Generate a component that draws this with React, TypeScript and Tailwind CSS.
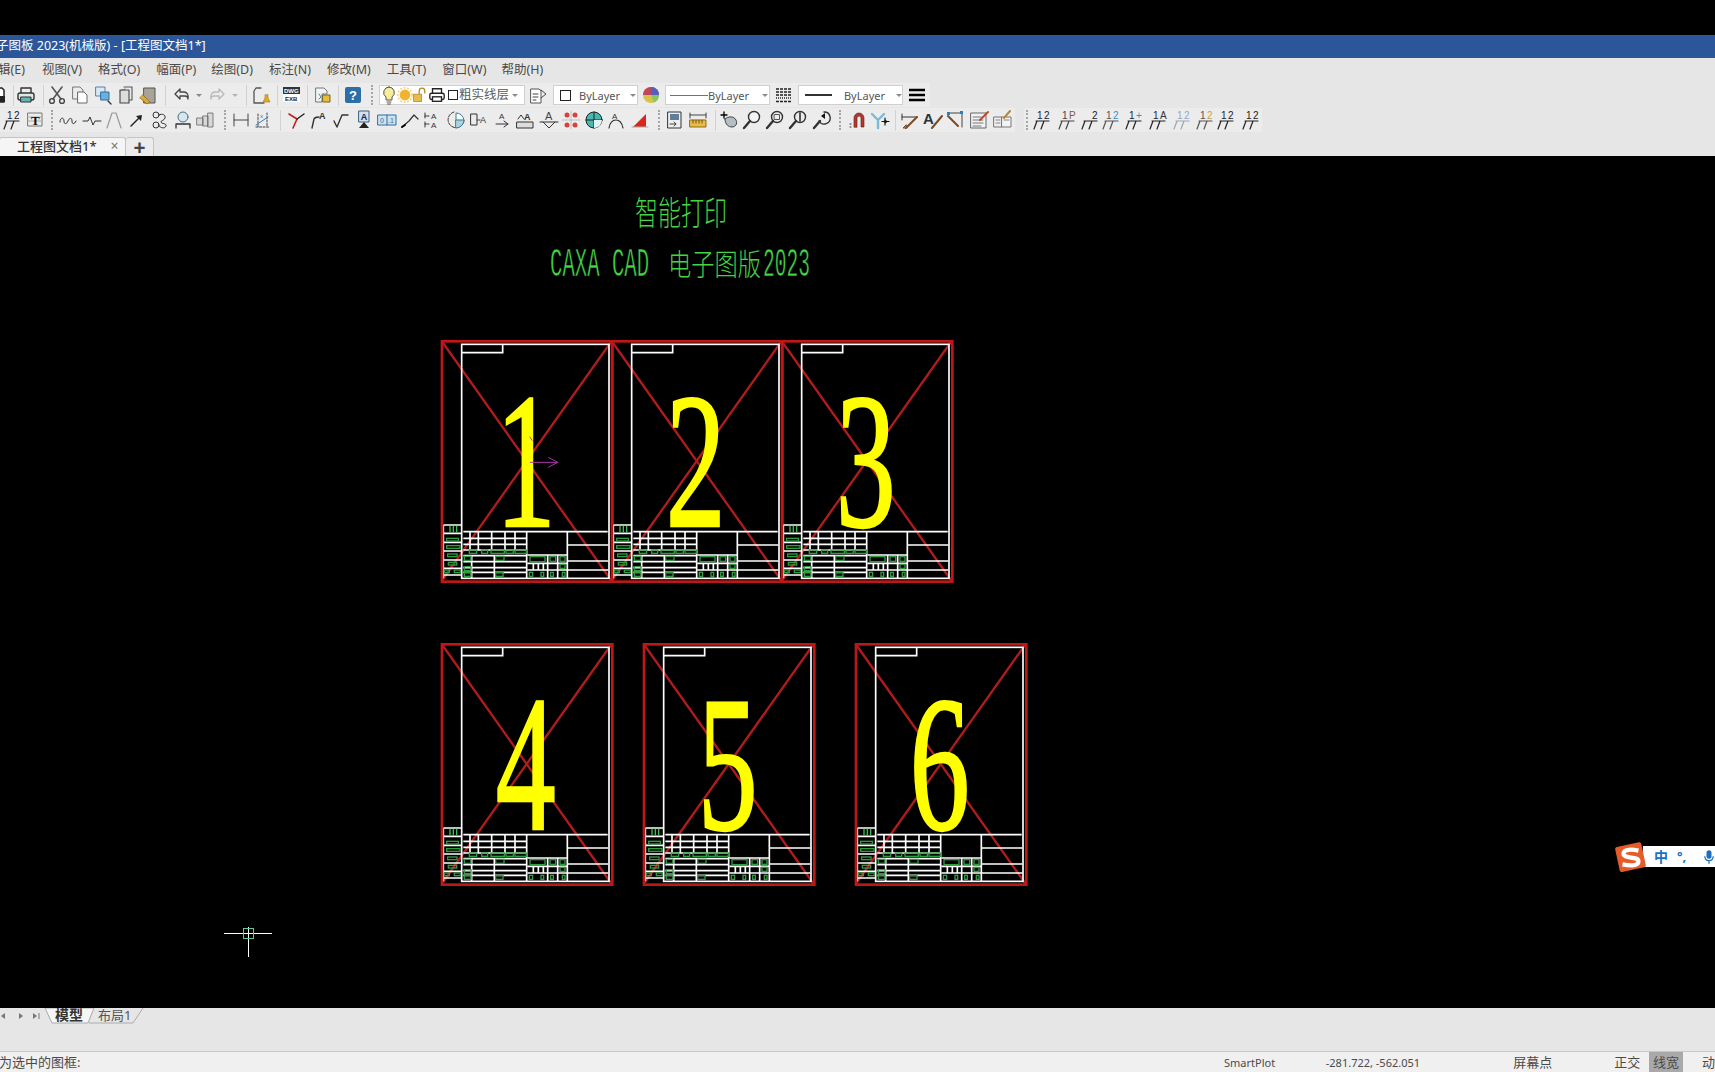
import type { ReactNode } from "react";

const cjk = "font-['Noto_Sans','Noto_Sans_CJK_SC',sans-serif]";

function I({ className = "", children }: { className?: string; children: ReactNode }) {
  return (
    <svg viewBox="0 0 20 20" fill="none" strokeLinecap="round" strokeLinejoin="round" className={`w-5 h-5 shrink-0 ${className}`}>
      {children}
    </svg>
  );
}

const Sep = ({ className = "" }: { className?: string }) => <div className={`w-px h-[21px] bg-[#d2d2d2] shrink-0 ${className}`} />;
const Grip = ({ className = "" }: { className?: string }) => (
  <div className={`w-0.5 h-[20px] shrink-0 border-l-2 border-dotted border-[#a5a5a5] ${className}`} />
);
const Drop = ({ className = "" }: { className?: string }) => (
  <div className={`w-0 h-0 shrink-0 border-x-[3px] border-t-[3px] border-x-transparent border-t-[#8a8a8a] ${className}`} />
);

// small "1 2 over slanted ticks" dimension icon, used all over the last toolbar
function Dim({ className = "", c = "#222", top = "12", t2 = "#222" }: { className?: string; c?: string; top?: string; t2?: string }) {
  return (
    <I className={className}>
      <path d="M4 11h13M2 19l3-8M9 19l3-8" stroke={c} strokeWidth="1.2" />
      <text x="5" y="9" fontSize="10" fontFamily="Liberation Sans" fill={c}>{top[0]}</text>
      <text x="12" y="9" fontSize="10" fontFamily="Liberation Sans" fill={t2}>{top[1]}</text>
    </I>
  );
}

function Toolbar1() {
  return (
    <div className="flex items-center h-[24px] w-[930px] bg-[#ececec] overflow-hidden">
      <I className="ml-[-14px]"><path d="M3 3h13l2 2v12H3z" fill="#fff" stroke="#222" strokeWidth="1.5" /><rect x="12" y="11" width="7" height="6" fill="#222" /></I>
      <Sep className="ml-[7px]" />
      <I className="ml-[2px]">
        <path d="M5 8V3h10v5" stroke="#333" strokeWidth="1.4" />
        <rect x="2" y="8" width="16" height="7" rx="2" fill="#dfe8e8" stroke="#333" strokeWidth="1.4" />
        <rect x="5" y="12" width="10" height="5" fill="#5fb8b0" stroke="#333" />
      </I>
      <Sep className="ml-[7px]" />
      <I className="ml-[3px]"><path d="M5 2l9 12M15 2L6 14" stroke="#555" strokeWidth="1.6" /><circle cx="5" cy="16" r="2.4" stroke="#444" strokeWidth="1.4" /><circle cx="15" cy="16" r="2.4" stroke="#444" strokeWidth="1.4" /></I>
      <I className="ml-[3px]"><path d="M3 2h7l3 3v9H3z" stroke="#777" /><path d="M8 7h6l3 3v8H8z" fill="#fff" stroke="#666" /></I>
      <I className="ml-[3px]"><rect x="3" y="2" width="9" height="9" fill="#d5e8f5" stroke="#5a7fa0" /><rect x="8" y="7" width="8" height="8" fill="#6ab0dd" stroke="#2f6d9c" /><path d="M15 16l3 3" stroke="#333" strokeWidth="1.4" /></I>
      <I className="ml-[3px]"><path d="M8 2h8v13h-3" stroke="#555" strokeWidth="1.1" /><rect x="4" y="5" width="9" height="13" fill="#ddd" stroke="#444" strokeWidth="1.1" /><path d="M4 6l5-2" stroke="#666" /></I>
      <I className="ml-[2px]"><rect x="6" y="3" width="11" height="15" fill="#a9a296" stroke="#555" /><path d="M2 13l7 6 3-2-7-7z" fill="#d9a93c" stroke="#8a6a20" strokeWidth=".8" /></I>
      <Sep className="ml-[7px]" />
      <I className="ml-[6px]"><path d="M8 4L3 9l5 5v-3h5c2 0 3 1 3 3 1-4-1-7-4-7H8z" stroke="#444" strokeWidth="1.3" /></I>
      <Drop className="ml-[4px]" />
      <I className="ml-[5px]"><path d="M12 4l5 5-5 5v-3H7c-2 0-3 1-3 3-1-4 1-7 4-7h4z" stroke="#b9b9b9" strokeWidth="1.3" /></I>
      <Drop className="ml-[5px] border-t-[#b5b5b5]" />
      <Sep className="ml-[8px]" />
      <I className="ml-[5px]"><path d="M9 3H4l-2 3v12h10" stroke="#555" strokeWidth="1.3" /><path d="M13 10v3l-2 4h7l-2-4v-3z" fill="#e3a91f" stroke="#a87a10" strokeWidth=".6" /></I>
      <Sep className="ml-[5px]" />
      <I className="ml-[4px]">
        <rect x="1" y="2" width="17" height="15" rx="1" fill="#fff" />
        <rect x="1" y="2" width="17" height="7" fill="#333" />
        <text x="2" y="8" fontSize="6" fontWeight="700" fontFamily="Liberation Sans" fill="#fff">DWG</text>
        <text x="3" y="16" fontSize="6" fontWeight="700" fontFamily="Liberation Sans" fill="#222">EXB</text>
      </I>
      <Sep className="ml-[5px]" />
      <I className="ml-[5px]"><path d="M3 3h8l3 3v3H9v8H3z" fill="#eef3f5" stroke="#777" /><path d="M6 9l2 3-2 2" stroke="#3c8fa0" /><path d="M10 10h7v7h-7z" fill="#e8bd3f" stroke="#7b6420" /></I>
      <Sep className="ml-[5px]" />
      <I className="ml-[4px]">
        <rect x="2" y="2" width="16" height="16" rx="2" fill="#2c6ea6" />
        <text x="10" y="15" fontSize="13" fontWeight="700" fontFamily="Liberation Sans" textAnchor="middle" fill="#fff">?</text>
      </I>
      <Grip className="ml-[8px]" />
      <div className="ml-[6px] w-[146px] h-[20px] flex items-center bg-white border border-[#d0d0d0] shrink-0">
        <I className="ml-[-1px]"><path d="M10 2a5.5 5.5 0 0 0-3 10v3h6v-3a5.5 5.5 0 0 0-3-10z" fill="#f7ec9a" stroke="#555" /><path d="M8 17h4M8.500 19h3" stroke="#555" /></I>
        <svg viewBox="0 0 20 20" className="w-[18px] h-[18px] ml-[-3px] shrink-0"><circle cx="10" cy="10" r="6" fill="#f1b431" /><circle cx="10" cy="10" r="8" stroke="#f6d27a" strokeDasharray="2 2" strokeWidth="2" fill="none" /></svg>
        <svg viewBox="0 0 20 20" className="w-[16px] h-[16px] ml-[-2px] shrink-0"><rect x="2" y="9" width="10" height="9" fill="#e8bb52" stroke="#b48a2c" /><path d="M9 9V5a3.500 3.500 0 0 1 7 0v3" stroke="#b48a2c" strokeWidth="1.6" fill="none" /></svg>
        <svg viewBox="0 0 20 20" className="w-[18px] h-[18px] shrink-0" fill="none"><path d="M5 8V3h10v5" stroke="#222" strokeWidth="1.5" /><rect x="2" y="8" width="16" height="7" rx="2" stroke="#222" strokeWidth="1.5" /><rect x="5" y="12" width="10" height="5" fill="#fff" stroke="#222" strokeWidth="1.5" /></svg>
        <div className="ml-[2px] w-[10px] h-[10px] border border-[#222] shrink-0" />
        <span className="text-[12.5px] leading-none ml-[1px] text-[#5a5a5a] whitespace-nowrap">粗实线层</span>
        <Drop className="ml-[3px]" />
      </div>
      <I className="ml-[3px]"><path d="M3 4h8l2 2v12H3z" fill="#fff" stroke="#555" /><path d="M5 9h5M5 12h5M5 15h3" stroke="#444" /><path d="M13 5l5 4-5 4" stroke="#444" /></I>
      <div className="ml-[5px] w-[85px] h-[20px] flex items-center bg-white border border-[#d0d0d0] shrink-0">
        <div className="ml-[6px] w-[11px] h-[11px] border border-[#222]" />
        <span className="ml-[8px] text-[11px] leading-none text-[#555]">ByLayer</span>
        <Drop className="ml-[10px]" />
      </div>
      <I className="ml-[3px]">
        <circle cx="10" cy="10" r="8" fill="#d8c24a" />
        <path d="M2 10a8 8 0 0 1 16 0z" fill="#c0455e" />
        <path d="M10 10h8a8 8 0 0 1-5 7.400z" fill="#85c66b" />
        <path d="M10 2a8 8 0 0 1 8 8h-8z" fill="#5660b8" />
      </I>
      <div className="ml-[4px] w-[105px] h-[20px] flex items-center bg-white border border-[#d0d0d0] shrink-0">
        <div className="ml-[4px] w-[38px] h-px bg-[#d44]" />
        <span className="text-[11px] leading-none text-[#555]">ByLayer</span>
        <Drop className="ml-[13px]" />
      </div>
      <I className="ml-[4px]"><path d="M2 4h16M2 7h16M2 10h16M2 16.500h16" stroke="#222" strokeWidth="1.3" strokeDasharray="3 1" strokeLinecap="butt" /><path d="M2 13h16" stroke="#222" strokeWidth="1.5" strokeDasharray="1 1" strokeLinecap="butt" /></I>
      <div className="ml-[4px] w-[105px] h-[20px] flex items-center bg-white border border-[#d0d0d0] shrink-0">
        <div className="ml-[6px] w-[28px] h-[2px] bg-[#333]" />
        <span className="ml-[12px] text-[11px] leading-none text-[#555]">ByLayer</span>
        <Drop className="ml-[11px]" />
      </div>
      <I className="ml-[4px]"><path d="M2 5h16M2 10h16M2 15h16" stroke="#000" strokeWidth="2.4" strokeLinecap="butt" /></I>
    </div>
  );
}

function Band1() {
  const s = "#333";
  return (
    <div className="flex items-center h-[24px] w-[1015px] bg-[#ececec] shrink-0 overflow-hidden">
      <Dim className="ml-[2px]" />
      <I className="ml-[3px]"><rect x="3" y="3" width="14" height="13" stroke="#777" /><path d="M3 7h14M3 11h14" stroke="#aaa" /><text x="6" y="15" fontSize="13" fontWeight="700" fontFamily="Liberation Serif" fill="#111">T</text></I>
      <Grip className="ml-[6px]" />
      <I className="ml-[5px]"><path d="M2 12c0-5 4-5 4-1s3 3 4 0 4-4 4 0 3 3 4 0" stroke={s} /></I>
      <I className="ml-[4px]"><path d="M1 11h5l2-4 3 8 2-4h6" stroke={s} /></I>
      <I className="ml-[2px]"><path d="M8 3L3 18M12 3l5 15M8 3h4" stroke="#999" strokeWidth="1.2" /></I>
      <I className="ml-[3px]"><path d="M4 16L13 7" stroke="#222" strokeWidth="1.4" /><path d="M15 5l-1 6-5-5z" fill="#222" /></I>
      <I className="ml-[3px]"><circle cx="6" cy="5" r="3" stroke={s} /><circle cx="6" cy="15" r="3" stroke={s} /><path d="M9 5c3-2 7 0 6 3s-4 2-4 4 6 1 5 4-5 2-7 0" stroke={s} /></I>
      <I className="ml-[3px]"><circle cx="10" cy="7" r="5" fill="#d7e7f0" stroke="#4d6d80" /><path d="M3 18v-4h14v4" stroke={s} strokeWidth="1.3" /></I>
      <I className="ml-[3px]"><path d="M1 8h6v7H1zM7 6h5v10H7zM12 3h5v14h-5z" fill="#d8d8d8" stroke="#666" strokeWidth=".8" /></I>
      <Grip className="ml-[8px]" />
      <I className="ml-[5px]"><path d="M3 4v12M17 4v12M3 10h14" stroke="#444" /></I>
      <I className="ml-[2px]"><path d="M3 17h14M5 4v13M14 3v14" stroke="#444" strokeDasharray="2 1.500" /><text x="7" y="8" fontSize="6" fill="#2a7fbf">x</text><path d="M3 15l12-8" stroke="#2a7fbf" /></I>
      <Sep className="ml-[7px]" />
      <I className="ml-[6px]"><path d="M2 4l8 5" stroke="#c02020" strokeWidth="1.6" /><path d="M10 9L6 18" stroke="#c02020" strokeWidth="1.6" /><path d="M10 9l7-5" stroke="#222" strokeWidth="1.4" /></I>
      <I className="ml-[1px]"><path d="M4 18l2-9c1-2 3-2 5-2" stroke={s} strokeWidth="1.4" /><text x="11" y="9" fontSize="9" fontWeight="700" fontFamily="Liberation Sans" fill="#333">A</text></I>
      <I className="ml-[3px]"><path d="M3 11l3 6 5-12h6" stroke={s} strokeWidth="1.4" /></I>
      <I className="ml-[3px]"><rect x="5" y="1" width="10" height="11" fill="#cfe0ee" stroke="#3c5f80" /><text x="10" y="10" fontSize="9" fontWeight="700" fontFamily="Liberation Sans" textAnchor="middle" fill="#224">A</text><path d="M10 12l-5 6h10z" fill="#222" /></I>
      <I className="ml-[3px]"><rect x="1" y="5" width="18" height="10" fill="#cfe2ef" stroke="#2d6f9e" /><path d="M10 5v10" stroke="#2d6f9e" /><text x="3" y="13" fontSize="7" fontFamily="Liberation Sans" fill="#2d6f9e">0</text><text x="11" y="13" fontSize="7" fontFamily="Liberation Sans" fill="#2d6f9e">.1</text></I>
      <I className="ml-[3px]"><path d="M2 17l7-6 5-6 4 4" stroke={s} strokeWidth="1.2" /><path d="M2 17l3-2" stroke="#000" strokeWidth="2" /></I>
      <I className="ml-[2px]"><text x="9" y="9" fontSize="8" fontFamily="Liberation Sans" fill={s}>A</text><text x="9" y="18" fontSize="8" fontFamily="Liberation Sans" fill={s}>A</text><path d="M3 6h5M3 14h5" stroke={s} strokeDasharray="1.500 1" /><path d="M3 3v5M3 12v5" stroke={s} /></I>
      <I className="ml-[4px]"><path d="M8 2A8 8 0 1 0 18 11" stroke={s} strokeDasharray="3 1.500" /><path d="M10 10V3a8 8 0 0 1 8 7z" fill="#fff" stroke="#3d7d99" /><path d="M10 10h8a8 8 0 0 1-8 8z" fill="#a9d2e2" stroke="#3d7d99" /></I>
      <I className="ml-[3px]"><rect x="2" y="4" width="6" height="11" stroke={s} /><path d="M8 10h3" stroke={s} strokeDasharray="1 1" /><text x="11" y="13" fontSize="9" fontFamily="Liberation Sans" fill={s}>A</text></I>
      <I className="ml-[4px]"><text x="6" y="9" fontSize="8" fontFamily="Liberation Sans" fill={s}>A</text><path d="M3 14h12M11 11l4 3-4 3" stroke={s} /></I>
      <I className="ml-[2px]"><text x="9" y="10" fontSize="9" fontWeight="700" fontFamily="Liberation Sans" fill={s}>A</text><path d="M3 9l3-4 3 4" stroke={s} /><rect x="2" y="12" width="16" height="6" fill="#ddd" stroke={s} /></I>
      <I className="ml-[4px]"><text x="6" y="10" fontSize="11" fontFamily="Liberation Sans" fill="#444">A</text><path d="M1 12h18M4 12l6 6 6-6" stroke={s} /></I>
      <I className="ml-[2px]"><g fill="#d6433c"><circle cx="6" cy="5" r="2.500" /><circle cx="14" cy="5" r="2.500" /><circle cx="6" cy="15" r="2.500" /><circle cx="14" cy="15" r="2.500" /></g><path d="M1 10h18M10 1v18" stroke="#aaa" strokeWidth=".6" /></I>
      <I className="ml-[3px]"><circle cx="10" cy="10" r="8" fill="#49b9b0" stroke="#222" /><path d="M2 10h16M10 2v16" stroke="#222" /><path d="M10 10h8a8 8 0 0 1-8 8z" fill="#e4f4f2" /></I>
      <I className="ml-[2px]"><text x="6" y="9" fontSize="8" fontFamily="Liberation Sans" fill={s}>A</text><path d="M3 18c1-6 3-8 7-8s6 3 7 8" stroke={s} strokeWidth="1.2" /></I>
      <I className="ml-[4px]"><path d="M16 4v13H3z" fill="#d8261c" /><path d="M2 17h16" stroke="#aaa" /></I>
      <Grip className="ml-[8px]" />
      <I className="ml-[5px]"><rect x="3" y="2" width="13" height="16" fill="#eee" stroke="#333" /><rect x="5" y="4" width="9" height="6" fill="#5e7f9c" /><path d="M5 14h6M9 12l2 2-2 2" stroke="#444" /></I>
      <I className="ml-[3px]"><path d="M2 3v5M18 3v5M2 5h16" stroke="#444" /><rect x="2" y="10" width="16" height="7" fill="#e8bd42" stroke="#8a6e20" /><path d="M5 10v3M8 10v3M11 10v3M14 10v3" stroke="#6d5415" /></I>
      <Sep className="ml-[7px]" />
      <I className="ml-[4px]"><path d="M5 9c3-3 9-3 11 1s-1 7-4 7-7-2-7-8z" fill="#b5bfc3" stroke="#444" /><path d="M4 2v6M1 5h6" stroke="#000" strokeWidth="1.3" /></I>
      <I className="ml-[2px]"><circle cx="12" cy="7" r="5.500" fill="#f4f4f4" stroke="#333" strokeWidth="1.4" /><path d="M8 11l-6 7" stroke="#333" strokeWidth="2.400" /></I>
      <I className="ml-[3px]"><circle cx="12" cy="7" r="5.500" stroke="#333" strokeWidth="1.4" /><rect x="9.500" y="4.500" width="5" height="5" stroke="#555" /><path d="M8 11l-6 7" stroke="#333" strokeWidth="2.400" /></I>
      <I className="ml-[3px]"><circle cx="12" cy="7" r="5.500" stroke="#333" strokeWidth="1.4" /><path d="M12 3v8" stroke="#555" strokeWidth="2" /><path d="M8 11l-6 7" stroke="#333" strokeWidth="2.400" /></I>
      <I className="ml-[4px]"><path d="M12 2a6 6 0 1 1-5 9" stroke="#333" strokeWidth="1.4" /><path d="M8 11l-6 7" stroke="#333" strokeWidth="2.400" /><path d="M13 3l-4 3 4 3z" fill="#111" /></I>
      <Grip className="ml-[7px]" />
      <I className="ml-[7px]"><path d="M6 17V8a5 5 0 0 1 10 0v9h-3V8a2 2 0 0 0-4 0v9z" fill="#b5382b" stroke="#5a201a" strokeWidth=".6" /><path d="M2 17h2M2 14h2" stroke="#333" strokeDasharray="1 1" /></I>
      <I className="ml-[2px]"><path d="M2 4l6 6 6-6M8 10v8" stroke="#7dbad8" strokeWidth="2.400" /><path d="M15 8v7M12 11.500h7" stroke="#111" strokeWidth="1.2" /><circle cx="15.500" cy="11.500" r="1.500" fill="#111" /></I>
      <Sep className="ml-[5px]" />
      <I className="ml-[4px]"><path d="M2 4v6M2 7h15" stroke="#333" /><path d="M17 7L6 18" stroke="#7a4a25" strokeWidth="2" /><path d="M6 15l-3 3 3 0z" fill="#c28a4f" stroke="#7a4a25" /></I>
      <I className="ml-[3px]"><text x="0" y="14" fontSize="15" fontWeight="700" fontFamily="Liberation Sans" fill="#2b3240">A</text><path d="M19 6L9 18" stroke="#7a4a25" strokeWidth="2" /></I>
      <I className="ml-[2px]"><path d="M4 3h13v14" stroke="#444" /><rect x="2" y="2" width="3" height="3" fill="#2a7fbf" /><rect x="15" y="1" width="3" height="3" fill="#2a7fbf" /><path d="M13 16L3 6" stroke="#7a4a25" strokeWidth="2" /></I>
      <I className="ml-[4px]"><rect x="2" y="3" width="15" height="15" fill="#f2f2f2" stroke="#666" /><path d="M4 7h8M4 10h10M4 13h10M4 16h8" stroke="#777" /><path d="M19 2l-8 8" stroke="#b2482a" strokeWidth="1.8" /></I>
      <I className="ml-[4px]"><path d="M1 7h8v10H1z" fill="#eee" stroke="#777" /><path d="M9 7h9v10H9z" fill="#f4f4f4" stroke="#777" /><path d="M3 10h4M3 13h4M11 10h5" stroke="#888" /><path d="M17 1l-6 7" stroke="#b58a3a" strokeWidth="2" /></I>
    </div>
  );
}

function Band2() {
  return (
    <div className="flex items-center h-[24px] w-[238px] ml-[9px] bg-[#ececec] shrink-0">
      <Grip className="ml-[2px]" />
      <Dim className="ml-[4px]" />
      <Dim className="ml-[5px]" top="1P" t2="#8a5a30" c="#444" />
      <Dim className="ml-[3px]" top=" 2" />
      <Dim className="ml-[1px]" top="12" t2="#3a8fd0" c="#555" />
      <Dim className="ml-[3px]" top="1+" t2="#3a8fd0" />
      <Dim className="ml-[4px]" top="1A" t2="#333" />
      <Dim className="ml-[4px]" top="12" c="#9aa7b5" t2="#8fa8d0" />
      <Dim className="ml-[3px]" top="12" t2="#d0a030" c="#555" />
      <Dim className="ml-[1px]" top="12" />
      <Dim className="ml-[5px]" top="12" />
    </div>
  );
}

const whiteLines = [
  "M85 590H518", "M85 610H275", "M85 628H275", "M85 645H275", "M85 662H275", "M85 680H275", "M85 698H275", "M85 712H275",
  "M105 590V645", "M130 590V645", "M170 590V645", "M210 590V645", "M240 590V645", "M275 590V730", "M397 590V730",
  "M110 662V730", "M178 662V730", "M278 660H397", "M278 685H397", "M278 705H397", "M338 660V730", "M368 660V730",
  "M295 685V705", "M310 685V705", "M325 685V705", "M397 630H520", "M397 678H520", "M397 705H520",
  "M25 570V730", "M25 570H78", "M25 595H78", "M25 622H78", "M25 648H78", "M25 675H78", "M25 700H78", "M25 720H78",
];

const greenRects = [
  [103, 645, 22, 10], [140, 645, 18, 10], [168, 645, 40, 10], [213, 645, 22, 10], [240, 645, 35, 10], [88, 664, 20, 12],
  [182, 664, 25, 12], [88, 695, 20, 12], [88, 712, 20, 12], [182, 712, 22, 12], [285, 665, 45, 15], [345, 665, 17, 14],
  [375, 665, 15, 14], [375, 688, 15, 12], [283, 712, 10, 12], [318, 712, 8, 12], [347, 712, 8, 12], [382, 712, 8, 12],
  [35, 610, 35, 8], [35, 632, 40, 8], [38, 657, 28, 8], [40, 682, 25, 8], [28, 705, 15, 8], [58, 705, 18, 8],
];

function Sheet({ digit, className, arrow = false }: { digit: string; className: string; arrow?: boolean }) {
  return (
    <svg viewBox="0 0 570 765" className={`absolute w-[190px] h-[255px] ${className}`} fill="none">
      <path d="M20 18L530 738M530 18L20 738" stroke="#b01c1c" strokeWidth="7" />
      <rect x="80" y="28" width="442" height="702" stroke="#fff" strokeWidth="5" />
      <path d="M80 53H203V28" stroke="#fff" strokeWidth="5" />
      <path d={whiteLines.join("")} stroke="#fff" strokeWidth="5" />
      <path d="M45 572V592M55 572V592M65 572V592" stroke="#35c24a" strokeWidth="4" />
      {greenRects.map(([x, y, w, h], i) => (
        <rect key={i} x={x} y={y} width={w} height={h} stroke="#2f9c3f" strokeWidth="4" />
      ))}
      <g transform="translate(272 574) scale(0.62 1)">
        <text x="0" y="0" textAnchor="middle" fontSize="580" fontFamily="'Liberation Serif', serif" fill="#ffff00" stroke="#ffff00" strokeWidth="7">{digit}</text>
      </g>
      {arrow && <path d="M285 382H368M340 367L368 382L340 397M284 305L292 317" stroke="#b035b0" strokeWidth="3" />}
      <rect x="21" y="19" width="511" height="721" stroke="#bd1818" strokeWidth="8" />
    </svg>
  );
}

export default function App() {
  return (
    <div className={`w-[1715px] h-[1072px] flex flex-col overflow-hidden bg-black ${cjk}`}>
      <div className="h-[35px] bg-black shrink-0" />
      <div className="h-[23px] bg-[#2b579a] shrink-0 flex items-center">
        <span className="ml-[-4px] text-[12.5px] leading-none text-white whitespace-nowrap">子图板 2023(机械版) - [工程图文档1*]</span>
      </div>
      <div className="h-[25px] bg-[#e6e6e6] shrink-0 flex items-center text-[12.5px] leading-none text-[#4a4a4a] whitespace-nowrap">
        <span className="ml-[-2px]">辑(E)</span>
        <span className="ml-[17px]">视图(V)</span>
        <span className="ml-[16px]">格式(O)</span>
        <span className="ml-[16px]">幅面(P)</span>
        <span className="ml-[15px]">绘图(D)</span>
        <span className="ml-[16px]">标注(N)</span>
        <span className="ml-[16px]">修改(M)</span>
        <span className="ml-[16px]">工具(T)</span>
        <span className="ml-[16px]">窗口(W)</span>
        <span className="ml-[15px]">帮助(H)</span>
      </div>
      <div className="h-[49px] bg-[#e6e6e6] shrink-0 flex flex-col">
        <Toolbar1 />
        <div className="flex mt-[1px]">
          <Band1 />
          <Band2 />
        </div>
      </div>
      <div className="h-[24px] bg-[#e6e6e6] shrink-0 flex items-end">
        <div className="ml-[-1px] w-[127px] h-[19px] pb-[2px] bg-[#f5f5f5] border border-b-0 border-[#c4c4c4] rounded-t-[3px] flex items-center shrink-0">
          <span className="ml-[17px] text-[13px] leading-none font-medium text-[#333]">工程图文档1*</span>
          <span className="ml-[14px] text-[14px] leading-none text-[#777]">×</span>
        </div>
        <div className="w-[28px] h-[19px] bg-[#ececec] border border-b-0 border-l-0 border-[#c4c4c4] rounded-t-[3px] flex items-center justify-center shrink-0">
          <span className="text-[21px] leading-none font-bold text-[#444]">+</span>
        </div>
      </div>

      <div className="relative flex-1 bg-black overflow-hidden">
        <svg viewBox="0 0 300 110" className="absolute left-[530px] top-[24px] w-[300px] h-[110px]">
          <text x="105" y="45" fontSize="33" textLength="92" lengthAdjust="spacingAndGlyphs" fontFamily="'Noto Sans CJK SC', sans-serif" fontWeight="300" fill="#45d445">智能打印</text>
          <text x="20" y="96" fontSize="40" textLength="99" lengthAdjust="spacingAndGlyphs" fontFamily="'Liberation Mono', monospace" fill="#45d445" stroke="#000" strokeWidth="0.6">CAXA CAD</text>
          <text x="138" y="95" fontSize="30" textLength="93" lengthAdjust="spacingAndGlyphs" fontFamily="'Noto Sans CJK SC', sans-serif" fontWeight="300" fill="#45d445">电子图版</text>
          <text x="233" y="96" fontSize="40" textLength="47" lengthAdjust="spacingAndGlyphs" fontFamily="'Liberation Mono', monospace" fill="#45d445" stroke="#000" strokeWidth="0.6">2023</text>
        </svg>
        <Sheet digit="1" arrow className="left-[435px] top-[179px]" />
        <Sheet digit="2" className="left-[605px] top-[179px]" />
        <Sheet digit="3" className="left-[775px] top-[179px]" />
        <Sheet digit="4" className="left-[435px] top-[482px]" />
        <Sheet digit="5" className="left-[637px] top-[482px]" />
        <Sheet digit="6" className="left-[849px] top-[482px]" />

        {/* crosshair at the mouse position */}
        <svg viewBox="0 0 48 30" className="absolute left-[224px] top-[771px] w-[48px] h-[30px]" fill="none">
          <path d="M0 6.500H48M24.500 0V30" stroke="#fff" strokeWidth="1" />
          <rect x="19.500" y="1.500" width="10" height="10" stroke="#5fc79a" />
        </svg>

        {/* IME status bar floating over the drawing */}
        <div className="absolute left-[1643px] top-[690px] w-[72px] h-[21px] bg-white flex items-center">
          <span className="ml-[11px] text-[14px] leading-none font-bold text-[#1c6fc0]">中</span>
          <span className="ml-[9px] text-[13px] leading-none font-bold text-[#1c6fc0]">°,</span>
          <svg viewBox="0 0 12 18" className="ml-[18px] w-[10px] h-[16px]" fill="none">
            <rect x="3" y="1" width="6" height="10" rx="3" fill="#1c6fc0" />
            <path d="M1 8c0 7 10 7 10 0M6 13v4" stroke="#1c6fc0" strokeWidth="1.500" />
          </svg>
        </div>
        <svg viewBox="0 0 30 30" className="absolute left-[1615px] top-[685px] w-[32px] h-[32px]" fill="none">
          <rect x="2" y="3" width="25" height="24" rx="2" fill="#e55b2a" transform="rotate(-12 15 15)" />
          <path d="M22 9c-5-1-14-2-14 3s14 2 14 7-9 4-15 3" stroke="#fff" strokeWidth="4" />
        </svg>
      </div>

      <div className="h-[44px] bg-[#e6e6e6] border-b border-[#c8c8c8] shrink-0">
        <svg viewBox="0 0 150 18" className="w-[150px] h-[18px]" fill="none">
          <path d="M5 5L1 8l4 3zM19 5l4 3-4 3zM33 5l4 3-4 3z" fill="#777" />
          <path d="M39 5v6" stroke="#777" />
          <path d="M45 0l7 15h36l6-15z" fill="#f5f5f5" stroke="#aaa" />
          <path d="M89 15h44l10-15" stroke="#aaa" />
          <text x="55" y="12" fontSize="14" fontWeight="700" fontFamily="'Noto Sans CJK SC', sans-serif" fill="#333">模型</text>
          <text x="98" y="12" fontSize="13" fontFamily="'Noto Sans', 'Noto Sans CJK SC', sans-serif" fill="#555">布局1</text>
        </svg>
      </div>
      <div className="h-[20px] bg-[#f0f0f0] shrink-0 flex items-center text-[13px] leading-none text-[#4a4a4a] whitespace-nowrap">
        <span className="ml-[-1px] w-[80px]">为选中的图框:</span>
        <span className="ml-[1145px] w-[102px] text-[11px]">SmartPlot</span>
        <span className="w-[188px] text-[11px]">-281.722, -562.051</span>
        <span className="w-[101px]">屏幕点</span>
        <span className="w-[35px]">正交</span>
        <span className="w-[34px] h-[20px] bg-[#a9a9a9] flex items-center justify-center">线宽</span>
        <span className="ml-[19px]">动</span>
      </div>
    </div>
  );
}
